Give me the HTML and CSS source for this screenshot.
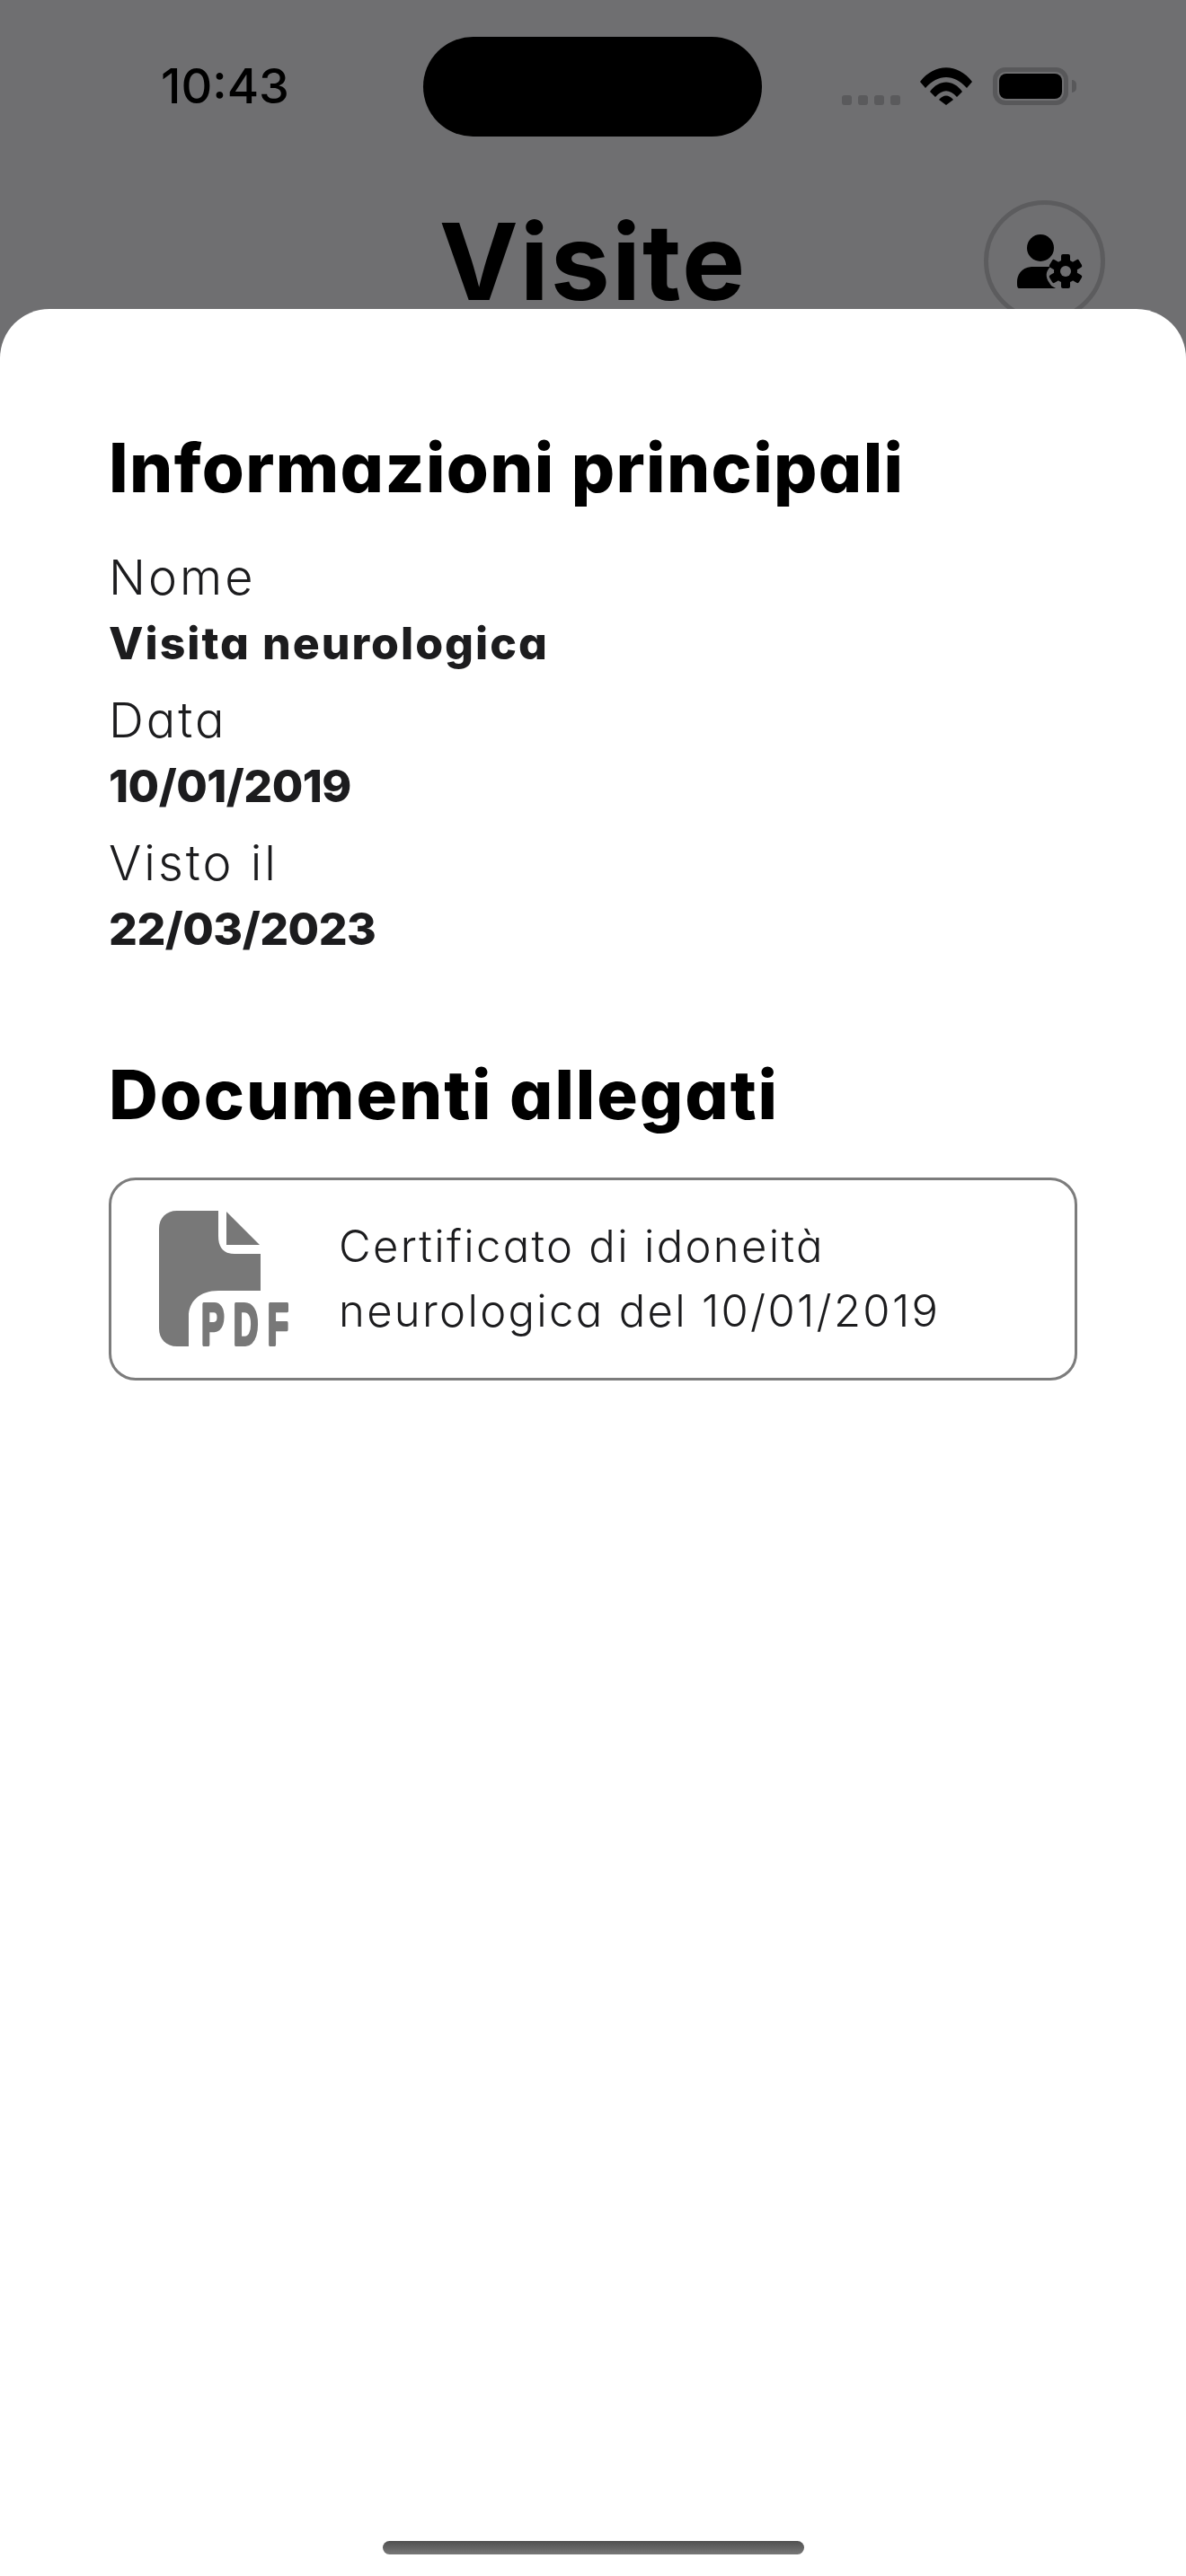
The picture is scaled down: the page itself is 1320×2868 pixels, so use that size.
FILE: index.html
```html
<!DOCTYPE html>
<html lang="it">
<head>
  <meta charset="UTF-8">
  <meta name="viewport" content="width=device-width, initial-scale=1.0">
  <title>Visite</title>
  <link rel="stylesheet" href="styles.css">
</head>
<body>
  <div class="backdrop">
    <div class="status-bar">
      <span class="time">10:43</span>
      <div class="island"></div>
      <div class="status-icons">
        <div class="signal"><i></i><i></i><i></i><i></i></div>
        <svg class="wifi" viewBox="0 0 58 42" width="58" height="42">
          <path d="M0 16 C16 -5 42 -5 58 16 L52 23 C38 7 20 7 6 23 Z"/>
          <path d="M11 27 C21 13 37 13 47 27 L41 33 C33 24 25 24 17 33 Z"/>
          <path d="M21 36 C26 30 32 30 37 36 L29 42 Z"/>
        </svg>
        <div class="battery"><div class="battery-fill"></div></div>
        <div class="battery-nub"></div>
      </div>
    </div>
    <header class="top-header">
      <h1>Visite</h1>
      <button class="profile-btn">
        <svg viewBox="0 0 76 62" width="76" height="62">
          <circle cx="27" cy="15" r="15"/>
          <path d="M1 53 C1 46 5 37 17 36 L38 36 C33 41 32 47 37 54 C39 58 41 58 44 60 L3 60 C1 60 1 56 1 53 Z"/>
          <circle class="gear" cx="55" cy="41" r="13"/>
          <g class="gear-teeth">
            <rect x="50" y="22" width="10" height="38" rx="2"/>
            <rect x="50" y="22" width="10" height="38" rx="2" transform="rotate(60 55 41)"/>
            <rect x="50" y="22" width="10" height="38" rx="2" transform="rotate(120 55 41)"/>
          </g>
          <circle class="gear-hole" cx="55" cy="41" r="6"/>
        </svg>
      </button>
    </header>
  </div>

  <main class="sheet">
    <h2 class="section-title first">Informazioni principali</h2>
    <div class="field">
      <span class="field-label">Nome</span>
      <span class="field-value">Visita neurologica</span>
    </div>
    <div class="field">
      <span class="field-label">Data</span>
      <span class="field-value date">10/01/2019</span>
    </div>
    <div class="field">
      <span class="field-label">Visto il</span>
      <span class="field-value date">22/03/2023</span>
    </div>

    <h2 class="section-title second">Documenti allegati</h2>
    <div class="doc-card">
      <svg class="pdf-icon" viewBox="0 -14 160 180" width="160" height="180">
        <path d="M20 0 L66 0 L66 28 C66 41 72 48 84 48 L113 48 L113 89 L66 89 C45 89 33 101 33 118 L33 151 L20 151 C8 151 0 143 0 131 L0 20 C0 8 8 0 20 0 Z"/>
        <path d="M75 1 L112 38 L75 38 Z"/>
        <text transform="translate(47 149) scale(0.6 1)">PDF</text>
      </svg>
      <p class="doc-name">Certificato di idoneità<br>neurologica del 10/01/2019</p>
    </div>

    <div class="home-indicator"></div>
  </main>
</body>
</html>
```

FILE: styles.css
```css
* {
  box-sizing: border-box;
}
body {
  margin: 0;
  width: 1320px;
  height: 2868px;
  overflow: hidden;
  display: flex;
  flex-direction: column;
  background: #6f6f71;
  font-family: Inter, "Liberation Sans", sans-serif;
  font-feature-settings: "cv11";
  color: #000;
}
.backdrop {
  height: 344px;
  flex-shrink: 0;
}
.status-bar {
  height: 152px;
  padding-top: 41px;
  padding-left: 179px;
  display: flex;
  align-items: flex-start;
}
.time {
  width: 292px;
  margin-top: 25px;
  font-size: 54px;
  line-height: 60px;
  font-weight: 500;
  font-feature-settings: normal;
}
.island {
  width: 377px;
  height: 111px;
  background: #000;
  border-radius: 56px;
}
.status-icons {
  display: flex;
  align-items: flex-start;
  margin-left: 89px;
  margin-top: 34px;
}
.signal {
  display: flex;
  gap: 7px;
  margin-top: 31px;
  margin-right: 22px;
}
.signal i {
  width: 11px;
  height: 11px;
  border-radius: 3px;
  background: #5a5a5c;
}
.wifi {
  fill: #000;
  margin-right: 23px;
}
.battery {
  width: 84px;
  height: 42px;
  border: 5px solid #58585a;
  border-radius: 14px;
  padding: 2px;
}
.battery-fill {
  height: 100%;
  background: #000;
  border-radius: 8px;
}
.battery-nub {
  width: 5px;
  height: 14px;
  margin: 14px 0 0 4px;
  background: #58585a;
  border-radius: 0 5px 5px 0;
}
.top-header {
  display: grid;
  grid-template-columns: 1fr auto 1fr;
  margin-top: 71px;
  padding: 0 90px;
}
.top-header h1 {
  grid-column: 2;
  margin: -2px 0 0;
  font-size: 118px;
  line-height: 140px;
  font-weight: 700;
  letter-spacing: 2px;
  font-feature-settings: normal;
}
.profile-btn {
  grid-column: 3;
  justify-self: end;
  width: 135px;
  height: 135px;
  padding: 2px 0 0 12px;
  display: flex;
  align-items: center;
  justify-content: center;
  background: transparent;
  border: 5px solid #5c5c5e;
  border-radius: 50%;
}
.profile-btn svg {
  fill: #000;
  flex-shrink: 0;
}
.profile-btn .gear-hole {
  fill: #6f6f71;
}
.sheet {
  flex: 1;
  position: relative;
  display: flex;
  flex-direction: column;
  padding: 0 121px;
  background: #fff;
  border-radius: 55px 55px 0 0;
}
.section-title {
  margin: 0;
  font-size: 76px;
  line-height: 90px;
  font-weight: 800;
  letter-spacing: 1.35px;
}
.section-title.first {
  margin-top: 131px;
  margin-bottom: 42px;
}
.section-title.second {
  margin-top: 89px;
  margin-bottom: 48px;
  letter-spacing: 1.9px;
}
.field {
  display: flex;
  flex-direction: column;
  margin-bottom: 13px;
  color: #1c1c1e;
}
.field-label {
  font-size: 54px;
  line-height: 72px;
  font-weight: 300;
  letter-spacing: 3px;
}
.field-value {
  font-size: 50px;
  line-height: 74px;
  font-weight: 800;
  letter-spacing: 2px;
}
.field-value.date {
  letter-spacing: -0.5px;
}
.doc-card {
  width: 1078px;
  height: 226px;
  display: flex;
  align-items: center;
  padding-left: 53px;
  gap: 40px;
  border: 3px solid #7c7c7c;
  border-radius: 30px;
}
.pdf-icon {
  fill: #787878;
  flex-shrink: 0;
}
.pdf-icon text {
  font-family: "Liberation Sans", sans-serif;
  font-size: 64px;
  font-weight: 700;
  letter-spacing: 17px;
  stroke: #787878;
  stroke-width: 4px;
  stroke-linejoin: round;
  font-feature-settings: normal;
}
.doc-name {
  margin: 0;
  font-size: 49px;
  line-height: 72px;
  font-weight: 300;
  letter-spacing: 2.3px;
  color: #1c1c1e;
}
.home-indicator {
  width: 469px;
  height: 15px;
  margin: auto auto 24px;
  background: linear-gradient(#505050, #787878);
  border-radius: 8px;
}
```
